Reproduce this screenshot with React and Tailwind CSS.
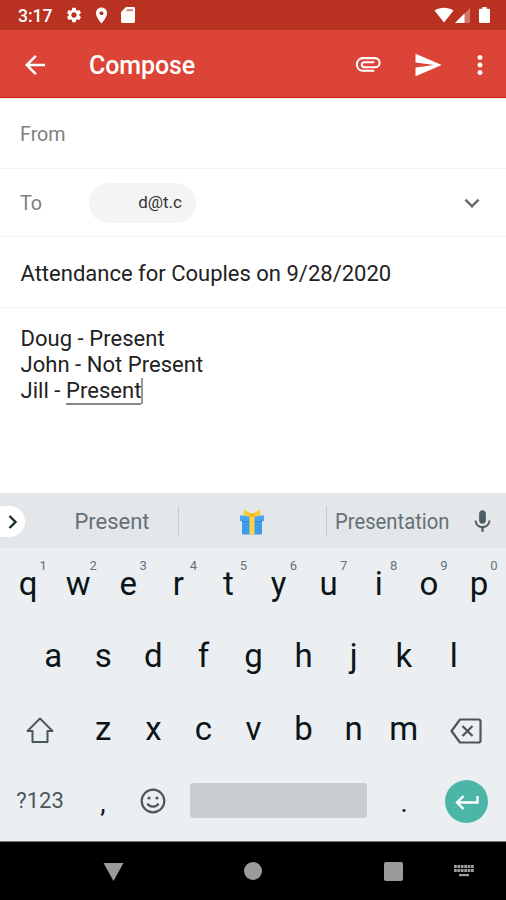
import React from "react";

function Icon({ d, className, children }) {
  return (
    <svg viewBox="0 0 24 24" fill="currentColor" className={`shrink-0 ${className}`}>
      {d && <path d={d} />}
      {children}
    </svg>
  );
}

const paths = {
  settings:
    "M19.14 12.94c.04-.3.06-.61.06-.94 0-.32-.02-.64-.07-.94l2.03-1.58c.18-.14.23-.41.12-.61l-1.92-3.32c-.12-.22-.37-.29-.59-.22l-2.39.96c-.5-.38-1.03-.7-1.62-.94l-.36-2.54c-.04-.24-.24-.41-.48-.41h-3.84c-.24 0-.43.17-.47.41l-.36 2.54c-.59.24-1.13.57-1.62.94l-2.39-.96c-.22-.08-.47 0-.59.22L2.74 8.87c-.12.21-.08.47.12.61l2.03 1.58c-.05.3-.09.63-.09.94s.02.64.07.94l-2.03 1.58c-.18.14-.23.41-.12.61l1.92 3.32c.12.22.37.29.59.22l2.39-.96c.5.38 1.03.7 1.62.94l.36 2.54c.05.24.24.41.48.41h3.84c.24 0 .44-.17.47-.41l.36-2.54c.59-.24 1.13-.56 1.62-.94l2.39.96c.22.08.47 0 .59-.22l1.92-3.32c.12-.22.07-.47-.12-.61l-2.01-1.58zM12 15.6c-1.98 0-3.6-1.62-3.6-3.6s1.62-3.6 3.6-3.6 3.6 1.62 3.6 3.6-1.62 3.6-3.6 3.6z",
  place:
    "M12 2C8.13 2 5 5.13 5 9c0 5.25 7 13 7 13s7-7.75 7-13c0-3.87-3.13-7-7-7zm0 9.5c-1.38 0-2.5-1.12-2.5-2.5s1.12-2.5 2.5-2.5 2.5 1.12 2.5 2.5-1.12 2.5-2.5 2.5z",
  back: "M20 11H7.83l5.59-5.59L12 4l-8 8 8 8 1.41-1.41L7.83 13H20v-2z",
  send: "M2.01 21L23 12 2.01 3 2 10l15 2-15 2z",
  more: "M12 8c1.1 0 2-.9 2-2s-.9-2-2-2-2 .9-2 2 .9 2 2 2zm0 2c-1.1 0-2 .9-2 2s.9 2 2 2 2-.9 2-2-.9-2-2-2zm0 6c-1.1 0-2 .9-2 2s.9 2 2 2 2-.9 2-2-.9-2-2-2z",
  down: "M7.41 8.59L12 13.17l4.59-4.58L18 10l-6 6-6-6z",
  mic: "M12 14c1.66 0 3-1.34 3-3V5c0-1.66-1.34-3-3-3S9 3.34 9 5v6c0 1.66 1.34 3 3 3zm5.3-3c0 3-2.54 5.1-5.3 5.1S6.7 14 6.7 11H5c0 3.41 2.72 6.23 6 6.72V21h2v-3.28c3.28-.49 6-3.31 6-6.72h-1.7z",
};

function StatusBar() {
  return (
    <div className="flex h-[30px] items-center bg-[#b93121] pl-[18px] pr-4 text-white">
      <span className="w-[47px] pt-px text-[17.5px] font-medium leading-[30px]">3:17</span>
      <Icon d={paths.settings} className="size-[18px]" />
      <Icon d={paths.place} className="ml-[9px] size-[19px]" />
      <svg viewBox="0 0 14 16" className="ml-[10px] h-4 w-[14px]" fill="currentColor">
        <path d="M5 0h7.600C13.400 0 14 .6 14 1.400v13.200c0 .8-.6 1.400-1.400 1.400H1.400C.6 16 0 15.400 0 14.600V5z" />
        <path d="M5.500 2.200h6.500v2H5.500z" fill="#b93121" opacity=".6" />
      </svg>
      <div className="flex-1" />
      <svg viewBox="0 0 20 16" className="h-4 w-5" fill="currentColor">
        <path d="M.5 3.600C6-.2 14-.2 19.500 3.600L10 15.500z" />
      </svg>
      <svg viewBox="0 0 15 15" className="ml-px mt-px h-[15px] w-[15px]" fill="currentColor">
        <path d="M15 0v15H0z" opacity=".35" />
        <path d="M9.500 5.500V15H0z" />
      </svg>
      <svg viewBox="0 0 11 16" className="ml-[9px] h-4 w-[11px]" fill="currentColor">
        <path d="M3.300 0h4.400v1.800H9.800c.7 0 1.200.5 1.200 1.200v11.800c0 .7-.5 1.200-1.200 1.200H1.200C.5 16 0 15.500 0 14.800V3c0-.7.5-1.200 1.200-1.200h2.100z" />
      </svg>
    </div>
  );
}

function Toolbar() {
  return (
    <header className="border-b border-[#fbe3e0]">
      <div className="flex h-[68px] items-center border-b border-[#cb1f10] bg-[#db4437] pl-5 pr-[11px] pt-[2px] text-white">
        <Icon d={paths.back} className="size-[30px]" />
        <h1 className="ml-[39px] pt-[2px] text-[25px] font-medium leading-none tracking-[-0.1px]">Compose</h1>
        <div className="flex-1" />
        <svg viewBox="0 0 26 15" className="h-[15px] w-[26px]" fill="none" stroke="currentColor" strokeWidth="2.100" strokeLinecap="round">
          <path d="M18.500 13.800H7.500a6.400 6.400 0 0 1 0-12.700H20a4.600 4.600 0 0 1 0 9.200H9.300a2.500 2.500 0 0 1 0-5H18.500" />
        </svg>
        <Icon d={paths.send} className="ml-8 size-[30px]" />
        <Icon d={paths.more} className="ml-[22px] size-[30px]" />
      </div>
    </header>
  );
}

function Gift() {
  return (
    <svg viewBox="0 0 26 26" className="h-[26px] w-[26px]">
      <path d="M3 10h20v14.500a1 1 0 0 1-1 1H4a1 1 0 0 1-1-1z" fill="#3f9ae8" />
      <path d="M1 6.500h24v5.500H1z" fill="#4aa6f2" />
      <path d="M2.500 12h21v.8h-21z" fill="#2b83cf" />
      <path d="M10.500 7h5v18.500h-5z" fill="#fbd54a" />
      <path d="M13 8C9 8 5 7 4.500 4.500c-.2-2 .5-4 1.500-3.500L13 5l7-4c1-.5 1.700 1.500 1.500 3.500C21 7 17 8 13 8z" fill="#f9cb38" />
      <path d="M10.800 4.500h4.400V8h-4.400z" fill="#f3b41e" />
    </svg>
  );
}

function Suggestions() {
  return (
    <div className="flex h-[55px] items-center bg-[#e4e7e9] text-[22px] text-[#657077]">
      <div className="mt-[2px] flex h-[31px] w-[25px] items-center rounded-r-full bg-white pl-[8px]">
        <svg viewBox="0 0 10 14" className="h-[14px] w-[10px]" fill="none" stroke="#1d2c33" strokeWidth="2.400">
          <path d="M1.500 1l6 6-6 6" />
        </svg>
      </div>
      <span className="w-[153px] pl-[21px] pt-[2px] text-center">Present</span>
      <span className="h-[30px] w-px bg-[#c6cacd]" />
      <span className="flex w-[147px] justify-center pr-[2px] pt-[2px]"><Gift /></span>
      <span className="h-[30px] w-px bg-[#c6cacd]" />
      <span className="flex w-[130px] justify-center pt-[2px]">
        <span className="-mx-3 scale-x-[0.92]">Presentation</span>
      </span>
      <Icon d={paths.mic} className="ml-[12px] mt-px size-[27px] text-[#505c63]" />
    </div>
  );
}

function Key({ label, hint }) {
  return (
    <div className="relative w-[50.1px] text-center text-[33px] leading-[72px]">
      {label}
      {hint && (
        <span className="absolute left-[35.5px] top-[10px] w-[9px] text-center text-[13px] leading-[16px] text-[#66727a]">{hint}</span>
      )}
    </div>
  );
}

function Keyboard() {
  const hints = "1234567890";
  return (
    <div className="flex h-[293px] flex-col bg-[#eceff1] pl-px text-[#0b1519]">
      <div className="flex h-[72px] justify-center">
        {[..."qwertyuiop"].map((k, i) => (
          <Key key={k} label={k} hint={hints[i]} />
        ))}
      </div>
      <div className="flex h-[72px] justify-center">
        {[..."asdfghjkl"].map((k) => (
          <Key key={k} label={k} />
        ))}
      </div>
      <div className="mt-px flex h-[72px] items-center justify-center">
        <div className="flex w-[75px] justify-center">
          <svg viewBox="0 0 28 27" className="mr-px mt-[2px] h-[27px] w-[28px]" fill="none" stroke="#4a565d" strokeWidth="2" strokeLinejoin="round">
            <path d="M14 1.500L26.500 14H21.500v11H6.500V14H1.500z" />
          </svg>
        </div>
        {[..."zxcvbnm"].map((k) => (
          <Key key={k} label={k} />
        ))}
        <div className="flex w-[75px] justify-center">
          <svg viewBox="0 0 32 26" className="mt-[4px] h-[26px] w-[32px]" fill="none" stroke="#4a565d" strokeWidth="2.200" strokeLinejoin="round">
            <path d="M10 1.500h18.500a2 2 0 0 1 2 2v19a2 2 0 0 1-2 2H10L1.500 13z" />
            <path d="M12.500 8l10 10M22.500 8l-10 10" />
          </svg>
        </div>
      </div>
      <div className="-ml-px flex h-[71px] items-center">
        <span className="w-20 text-center text-[22px] text-[#4a565d]">?123</span>
        <span className="w-[46px] pt-[5px] text-center text-[27px]">,</span>
        <div className="flex w-[54px] justify-center">
          <svg viewBox="0 0 26 26" className="size-[26px]" fill="none" stroke="#4a565d" strokeWidth="2.200">
            <circle cx="13" cy="13" r="11.300" />
            <path d="M7.500 15.500c2 4.200 9 4.200 11 0" />
            <circle cx="9" cy="10" r="1.600" fill="#4a565d" stroke="none" />
            <circle cx="17" cy="10" r="1.600" fill="#4a565d" stroke="none" />
          </svg>
        </div>
        <div className="ml-[10px] h-[35px] w-[177px] rounded-[3px] bg-[#c9cdd0]" />
        <span className="ml-[12px] w-[50px] pt-[5px] text-center text-[27px]">.</span>
        <div className="ml-[16px] mt-px flex size-[43px] items-center justify-center rounded-full bg-[#4bb5a7]">
          <svg viewBox="0 0 24 16" className="mt-[3px] h-4 w-6" fill="none" stroke="#fff" strokeWidth="2.400">
            <path d="M22.500 1v6.500H2M8.500 1L2 7.500 8.500 14" />
          </svg>
        </div>
      </div>
    </div>
  );
}

function NavBar() {
  return (
    <div className="flex h-[59px] items-center border-t border-[#777] bg-black text-[#9b9b9b]">
      <svg viewBox="0 0 20 18" className="ml-[103px] mt-[2px] h-[18px] w-[21px]" fill="currentColor">
        <path d="M0 0h20L10 18z" />
      </svg>
      <div className="ml-[120px] size-[18px] rounded-full bg-[#9b9b9b]" />
      <div className="ml-[121.500px] size-[19px] rounded-[2px] bg-[#9b9b9b]" />
      <svg viewBox="0 0 20 12" className="ml-[51px] h-3 w-5" fill="currentColor">
        {[0, 4].map((y) =>
          [0, 3.4, 6.8, 10.2, 13.6, 17].map((x) => <rect key={`${x}-${y}`} x={x} y={y} width="2.800" height="3" />)
        )}
        <rect x="5" y="9" width="10" height="2.200" />
      </svg>
    </div>
  );
}

export default function App() {
  return (
    <div className="flex h-[900px] w-[506px] flex-col overflow-hidden bg-white font-[Roboto,sans-serif]">
      <StatusBar />
      <Toolbar />
      <div className="flex h-[70px] items-center border-b border-[#f4f4f4] pl-5 pt-[3px] text-[19.7px] text-[#808080]">From</div>
      <div className="flex h-[68px] items-center border-b border-[#f4f4f4] pl-5 text-[19.7px] text-[#808080]">
        <span className="w-[69px] pt-[3px]">To</span>
        <span className="h-10 w-[107px] rounded-full bg-[#f4f4f4] pr-[14px] text-right text-[17px] leading-[39px] text-[#333]">d@t.c</span>
        <Icon d={paths.down} className="ml-[261px] size-[30px] text-[#6b6b6b]" />
      </div>
      <div className="flex h-[71px] items-center border-b border-[#f4f4f4] pl-[20.5px] pt-[2px] text-[22px] text-[#222]">
        Attendance for Couples on 9/28/2020
      </div>
      <div className="h-[185px] pl-[20.5px] pt-[18px] text-[22px] leading-[26px] tracking-[0.04px] text-[#222]">
        <p>Doug - Present</p>
        <p>John - Not Present</p>
        <p className="flex whitespace-pre">
          Jill - <span className="h-[27px] border-b-2 border-[#888]">Present</span>
          <span className="h-[26px] w-[2px] bg-[#999]" />
        </p>
      </div>
      <Suggestions />
      <Keyboard />
      <NavBar />
    </div>
  );
}
